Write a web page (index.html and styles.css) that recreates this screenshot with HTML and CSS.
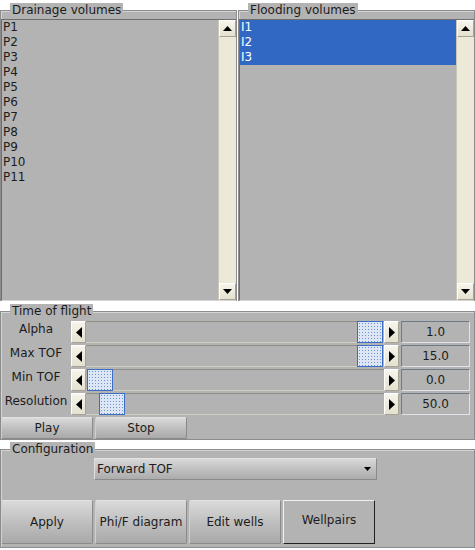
FILE: index.html
```html
<!DOCTYPE html>
<html lang="en">
<head>
    <meta charset="UTF-8">
    <title>Flow diagnostics</title>
    <link rel="stylesheet" href="styles.css">
</head>
<body>

<div class="top">
    <div class="group half">
        <span class="glabel">Drainage volumes</span>
        <div class="browser">
            <div class="items">
                <div class="item">P1</div>
                <div class="item">P2</div>
                <div class="item">P3</div>
                <div class="item">P4</div>
                <div class="item">P5</div>
                <div class="item">P6</div>
                <div class="item">P7</div>
                <div class="item">P8</div>
                <div class="item">P9</div>
                <div class="item">P10</div>
                <div class="item">P11</div>
            </div>
            <div class="scrollbar">
                <div class="sbtn"><svg width="9" height="5" viewBox="0 0 9 5"><path d="M0 5 L4.5 0 L9 5 Z" fill="#000"/></svg></div>
                <div class="strack"></div>
                <div class="sbtn"><svg width="9" height="5" viewBox="0 0 9 5"><path d="M0 0 L9 0 L4.5 5 Z" fill="#000"/></svg></div>
            </div>
        </div>
    </div>
    <div class="group half">
        <span class="glabel">Flooding volumes</span>
        <div class="browser">
            <div class="items">
                <div class="item selected">I1</div>
                <div class="item selected">I2</div>
                <div class="item selected">I3</div>
            </div>
            <div class="scrollbar">
                <div class="sbtn"><svg width="9" height="5" viewBox="0 0 9 5"><path d="M0 5 L4.5 0 L9 5 Z" fill="#000"/></svg></div>
                <div class="strack"></div>
                <div class="sbtn"><svg width="9" height="5" viewBox="0 0 9 5"><path d="M0 0 L9 0 L4.5 5 Z" fill="#000"/></svg></div>
            </div>
        </div>
    </div>
</div>

<div class="group tof">
    <span class="glabel">Time of flight</span>
    <div class="srow">
        <div class="rlabel">Alpha</div>
        <div class="slider">
            <div class="abtn"><svg width="6" height="11" viewBox="0 0 6 11"><path d="M6 0 L0 5.5 L6 11 Z" fill="#000"/></svg></div>
            <div class="track"><div class="thumb" style="margin-left: 271px"></div></div>
            <div class="abtn"><svg width="6" height="11" viewBox="0 0 6 11"><path d="M0 0 L6 5.5 L0 11 Z" fill="#000"/></svg></div>
        </div>
        <div class="value">1.0</div>
    </div>
    <div class="srow">
        <div class="rlabel">Max TOF</div>
        <div class="slider">
            <div class="abtn"><svg width="6" height="11" viewBox="0 0 6 11"><path d="M6 0 L0 5.5 L6 11 Z" fill="#000"/></svg></div>
            <div class="track"><div class="thumb" style="margin-left: 271px"></div></div>
            <div class="abtn"><svg width="6" height="11" viewBox="0 0 6 11"><path d="M0 0 L6 5.5 L0 11 Z" fill="#000"/></svg></div>
        </div>
        <div class="value">15.0</div>
    </div>
    <div class="srow">
        <div class="rlabel">Min TOF</div>
        <div class="slider">
            <div class="abtn"><svg width="6" height="11" viewBox="0 0 6 11"><path d="M6 0 L0 5.5 L6 11 Z" fill="#000"/></svg></div>
            <div class="track"><div class="thumb" style="margin-left: 1px"></div></div>
            <div class="abtn"><svg width="6" height="11" viewBox="0 0 6 11"><path d="M0 0 L6 5.5 L0 11 Z" fill="#000"/></svg></div>
        </div>
        <div class="value">0.0</div>
    </div>
    <div class="srow">
        <div class="rlabel">Resolution</div>
        <div class="slider">
            <div class="abtn"><svg width="6" height="11" viewBox="0 0 6 11"><path d="M6 0 L0 5.5 L6 11 Z" fill="#000"/></svg></div>
            <div class="track"><div class="thumb" style="margin-left: 13px"></div></div>
            <div class="abtn"><svg width="6" height="11" viewBox="0 0 6 11"><path d="M0 0 L6 5.5 L0 11 Z" fill="#000"/></svg></div>
        </div>
        <div class="value">50.0</div>
    </div>
    <div class="brow">
        <button class="btn small">Play</button>
        <button class="btn small">Stop</button>
    </div>
</div>

<div class="group config">
    <span class="glabel">Configuration</span>
    <div class="choice">
        <span>Forward TOF</span>
        <svg width="7" height="4" viewBox="0 0 7 4"><path d="M0 0 L7 0 L3.5 4 Z" fill="#000"/></svg>
    </div>
    <div class="brow big">
        <button class="btn tall">Apply</button>
        <button class="btn tall">Phi/F diagram</button>
        <button class="btn tall">Edit wells</button>
        <button class="btn tall flat">Wellpairs</button>
    </div>
</div>

</body>
</html>
```

FILE: styles.css
```css
body {
    margin: 0;
    width: 475px;
    height: 550px;
    overflow: hidden;
    background-color: #ffffff;
    font-family: "DejaVu Sans", sans-serif;
    font-size: 12px;
    color: #1c1c1c;
}

/* framed groups with the label sitting on the frame line */
.group {
    position: relative;
    box-sizing: border-box;
    background-color: #b3b3b3;
    border: 1px solid #8c8c8c;
    box-shadow: inset 1px 1px 0 #d4d4d4;
}

.glabel {
    position: absolute;
    top: -8px;
    left: 9px;
    height: 14px;
    line-height: 14px;
    padding: 0 2px;
    background-color: #b3b3b3;
}

.top {
    display: flex;
    gap: 1px;
    box-sizing: border-box;
    height: 301px;
    padding-top: 10px;
}

.half {
    width: 237px;
    display: flex;
    flex-direction: column;
    padding-top: 8px;
    border-bottom: none;
}

.browser {
    flex: 1;
    display: flex;
    border-top: 1px solid #6e6e6e;
    border-left: 1px solid #6e6e6e;
    border-bottom: 1px solid #d6d6d6;
}

.items {
    flex: 1;
}

.item {
    height: 15px;
    line-height: 15px;
    padding-left: 1px;
}

.item.selected {
    background-color: #3068c4;
    color: #ffffff;
}

.scrollbar {
    width: 17px;
    display: flex;
    flex-direction: column;
    background-color: #ece9d8;
    border-left: 1px solid #c9c6b6;
}

.sbtn {
    box-sizing: border-box;
    height: 17px;
    display: flex;
    align-items: center;
    justify-content: center;
    background: linear-gradient(#f7f5ec, #e4e1d0);
    border-top: 1px solid #ffffff;
    border-left: 1px solid #ffffff;
    border-right: 1px solid #a6a394;
    border-bottom: 1px solid #a6a394;
}

.strack {
    flex: 1;
}

/* time of flight sliders */
.tof {
    margin-top: 10px;
    padding-top: 9px;
}

.srow {
    display: flex;
    height: 22px;
    margin-bottom: 2px;
}

.rlabel {
    width: 70px;
    text-align: center;
    line-height: 14px;
    padding-top: 1px;
}

.slider {
    display: flex;
    width: 328px;
}

.abtn {
    box-sizing: border-box;
    width: 15px;
    display: flex;
    align-items: center;
    justify-content: center;
    background: linear-gradient(#f7f5ec, #e4e1d0);
    border-top: 1px solid #ffffff;
    border-left: 1px solid #ffffff;
    border-right: 1px solid #a6a394;
    border-bottom: 1px solid #a6a394;
}

.track {
    flex: 1;
    display: flex;
    border-top: 1px solid #8e8e86;
    border-bottom: 1px solid #cfcfc6;
}

.thumb {
    box-sizing: border-box;
    width: 26px;
    margin-top: -1px;
    margin-bottom: -1px;
    border: 1px solid #3b6dc2;
    background-color: #dce6f4;
    background-image: radial-gradient(#6f93d2 40%, transparent 45%);
    background-size: 3px 3px;
}

.value {
    box-sizing: border-box;
    width: 69px;
    margin-left: 2px;
    line-height: 20px;
    text-align: center;
    border-top: 1px solid #6f7a88;
    border-left: 1px solid #6f7a88;
    border-right: 1px solid #dfe3ea;
    border-bottom: 1px solid #dfe3ea;
}

.brow {
    display: flex;
    gap: 2px;
}

.btn {
    box-sizing: border-box;
    width: 92px;
    padding: 0;
    font-family: "DejaVu Sans", sans-serif;
    font-size: 12px;
    color: #1c1c1c;
    background: linear-gradient(#dadada, #bdbdbd 55%, #a9a9a9);
    border: 1px solid #8a8a8a;
    border-top-color: #e2e2e2;
    border-left-color: #d0d0d0;
    border-radius: 2px;
}

.small {
    height: 22px;
}

.tall {
    height: 44px;
}

.flat {
    background: #b3b3b3;
    border: 1px solid #f0f0f0;
    border-right-color: #202020;
    border-bottom-color: #202020;
    border-radius: 0;
    padding-bottom: 4px;
}

/* configuration */
.config {
    margin-top: 9px;
    padding-top: 8px;
    padding-bottom: 3px;
}

.choice {
    box-sizing: border-box;
    width: 283px;
    height: 22px;
    margin-left: 93px;
    display: flex;
    align-items: center;
    justify-content: space-between;
    padding: 0 5px 0 2px;
    background: linear-gradient(#d8d8d8, #bcbcbc 60%, #acacac);
    border: 1px solid #8a8a8a;
    border-top-color: #e4e4e4;
    border-left-color: #e0e0e0;
}

.big {
    margin-top: 20px;
}
```
